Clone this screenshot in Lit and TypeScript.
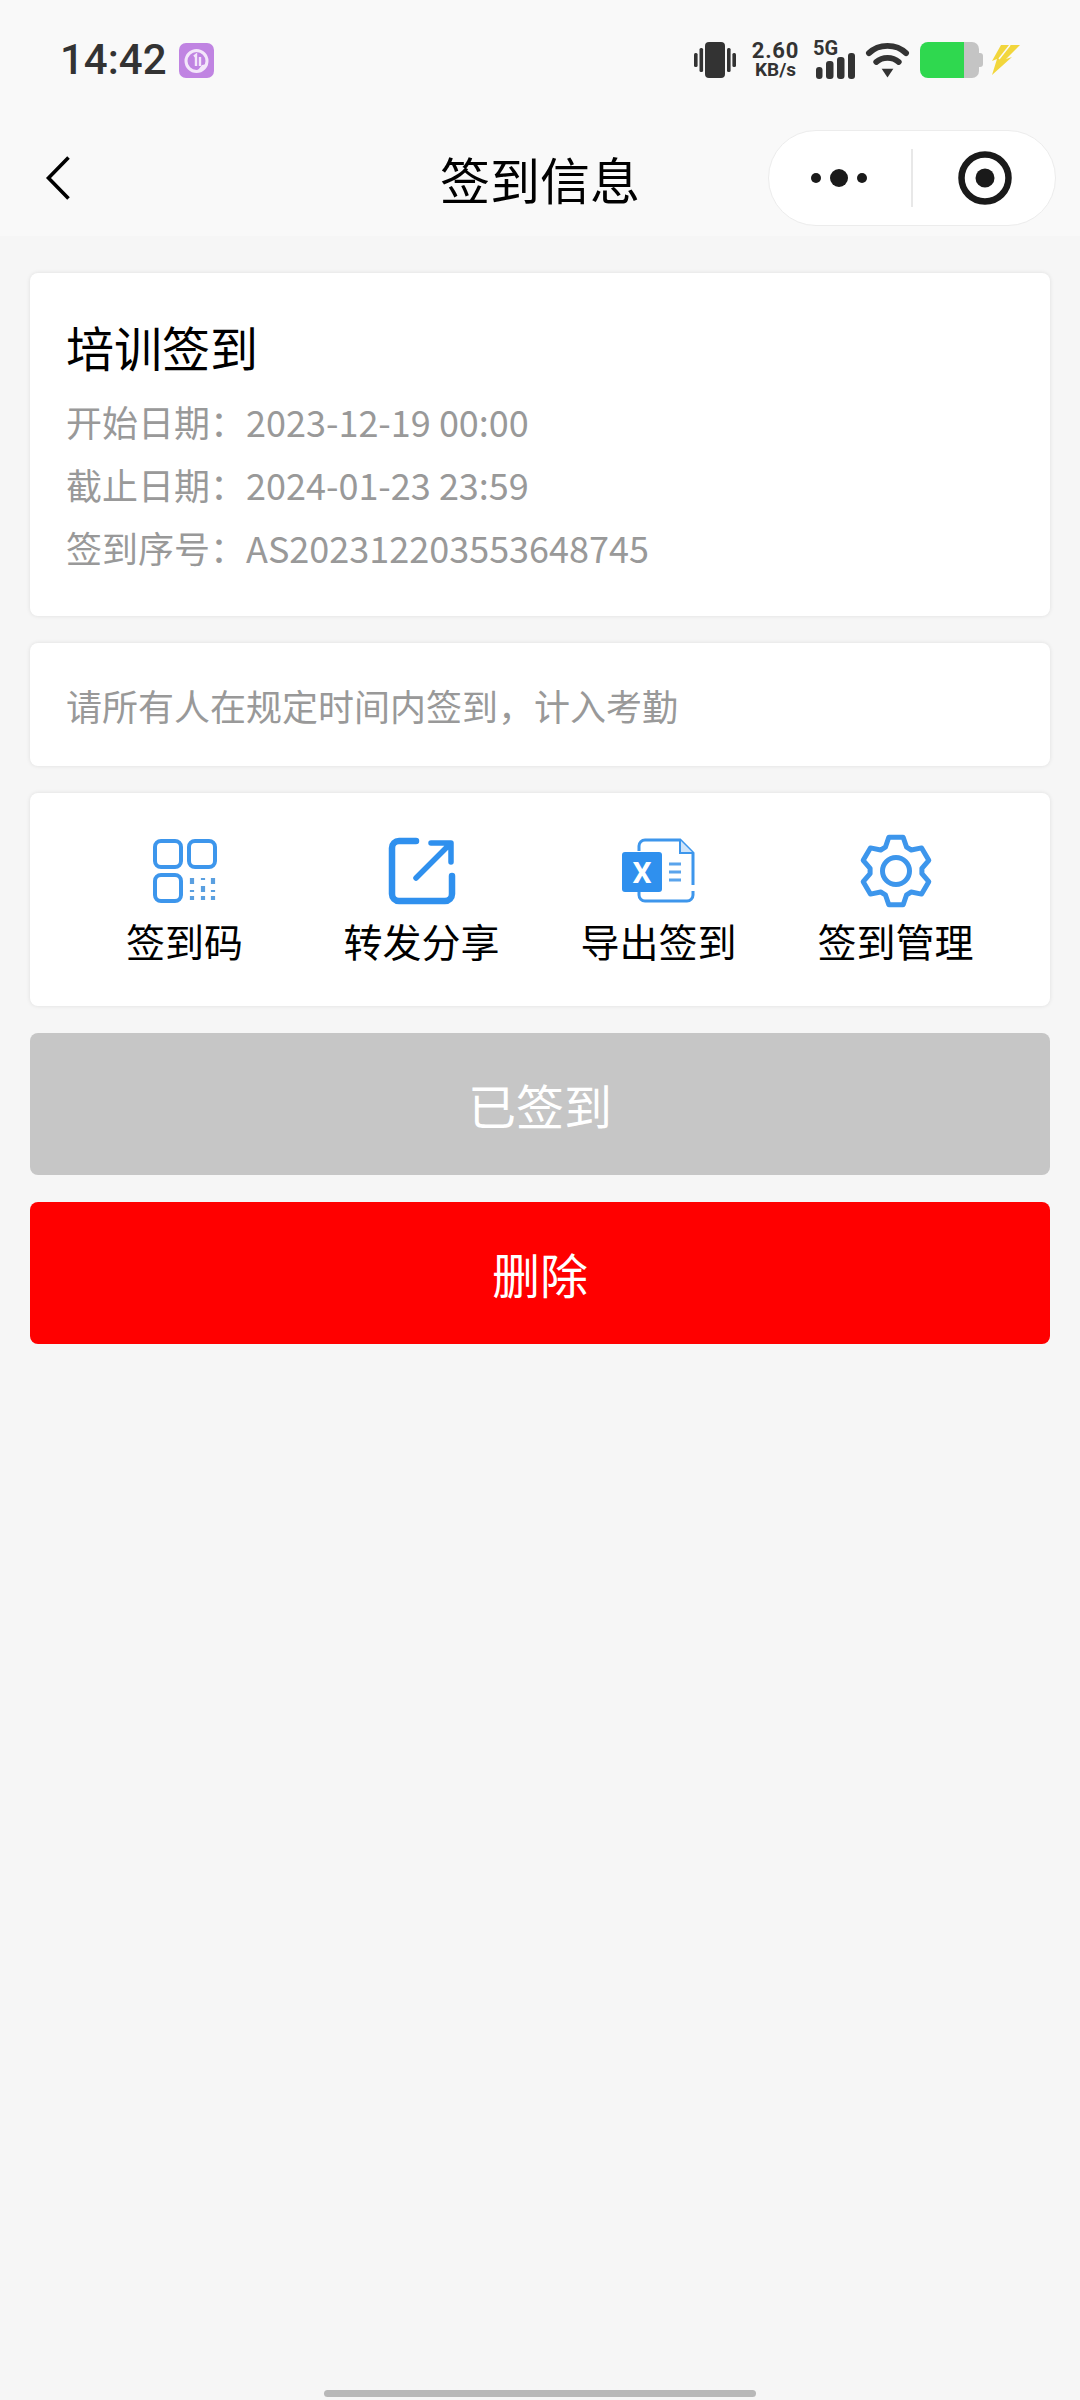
import { LitElement, html, css, svg } from "lit";
import { customElement } from "lit/decorators.js";

function gearPoints(): string {
  const c = 37;
  const pts: string[] = [];
  const p = (r: number, deg: number) => {
    const t = (deg * Math.PI) / 180;
    return `${(c + r * Math.cos(t)).toFixed(1)},${(c + r * Math.sin(t)).toFixed(1)}`;
  };
  for (let k = 0; k < 6; k++) {
    const a = k * 60 - 90;
    pts.push(p(26, a - 24), p(34.5, a - 12), p(34.5, a + 12), p(26, a + 24));
  }
  return pts.join(" ");
}

const ACTIONS = [
  { label: "签到码", icon: "qr" },
  { label: "转发分享", icon: "share" },
  { label: "导出签到", icon: "excel" },
  { label: "签到管理", icon: "gear" },
];

@customElement("app-root")
export class AppRoot extends LitElement {
  static styles = css`
    :host {
      display: block;
      font-family: "Noto Sans CJK SC", "Noto Sans", sans-serif;
    }
    .page {
      width: 1080px;
      min-height: 2400px;
      background: #f6f6f6;
      display: flex;
      flex-direction: column;
    }
    .top {
      background: #f9f9f9;
    }
    .status {
      height: 120px;
      padding: 0 60px;
      display: flex;
      align-items: center;
      justify-content: space-between;
    }
    .status-left {
      display: flex;
      align-items: center;
      gap: 12px;
    }
    .time {
      font-family: Roboto, sans-serif;
      font-weight: 500;
      font-size: 42px;
      line-height: 42px;
      color: #333;
    }
    .status-right {
      display: flex;
      align-items: center;
      gap: 11px;
      color: #333;
    }
    svg {
      display: block;
      overflow: visible;
    }
    .vib {
      margin-right: 2px;
    }
    .speed {
      width: 53px;
      display: flex;
      flex-direction: column;
      align-items: center;
      font-family: Roboto, sans-serif;
      font-weight: 700;
    }
    .speed .v {
      font-size: 22px;
      line-height: 20px;
      letter-spacing: 0.8px;
    }
    .speed .u {
      font-size: 19px;
      line-height: 18px;
    }
    .signal {
      width: 42px;
      height: 38px;
      position: relative;
    }
    .fiveg {
      position: absolute;
      left: 0;
      top: -3px;
      font-family: Roboto, sans-serif;
      font-weight: 700;
      font-size: 20px;
      line-height: 20px;
    }
    .nav {
      height: 116px;
      padding: 0 24px;
      display: grid;
      grid-template-columns: minmax(0, 1fr) auto minmax(0, 1fr);
      align-items: center;
    }
    .back {
      margin-left: 22px;
    }
    .title {
      font-size: 50px;
      line-height: 60px;
      color: #000;
    }
    .capsule {
      justify-self: end;
      width: 288px;
      height: 96px;
      flex: none;
      box-sizing: border-box;
      border: 1.5px solid #ececec;
      border-radius: 48px;
      background: #fff;
      display: grid;
      grid-template-columns: 1fr 1.5px 1fr;
      align-items: center;
      justify-items: center;
    }
    .dots {
      margin-right: 2px;
    }
    .target {
      margin-left: 2px;
    }
    .divider {
      width: 1.5px;
      height: 58px;
      background: #e8e8e8;
    }
    main {
      padding: 37px 30px 0;
      display: flex;
      flex-direction: column;
      gap: 27px;
    }
    .card {
      background: #fff;
      border-radius: 8px;
      box-shadow: 0 0 4px rgba(0, 0, 0, 0.1);
    }
    .info {
      height: 343px;
      box-sizing: border-box;
      padding: 37px 36px 0;
    }
    .info h1 {
      margin: 0 0 8px;
      font-size: 48px;
      line-height: 72px;
      font-weight: 400;
      color: #000;
    }
    .row {
      font-size: 36px;
      line-height: 63px;
      color: #999;
      display: flex;
    }
    .row .k {
      width: 180px;
    }
    .note {
      height: 123px;
      box-sizing: border-box;
      padding: 0 36px;
      display: flex;
      align-items: center;
      font-size: 36px;
      color: #999;
    }
    .actions {
      height: 213px;
      box-sizing: border-box;
      padding: 0 36px;
      display: grid;
      grid-template-columns: repeat(4, 1fr);
    }
    .action {
      display: flex;
      flex-direction: column;
      align-items: center;
    }
    .ico {
      height: 128px;
      display: flex;
      align-items: center;
      padding-top: 27px;
      box-sizing: border-box;
      justify-content: center;
    }
    .action span {
      font-size: 39px;
      line-height: 46px;
      color: #000;
      white-space: nowrap;
      margin-top: -4px;
    }
    .btn {
      height: 142px;
      border-radius: 8px;
      display: flex;
      align-items: center;
      justify-content: center;
      color: #fff;
      font-size: 48px;
    }
    .btn.done {
      background: #c6c6c6;
    }
    .btn.del {
      background: #ff0000;
    }
    .home {
      margin: auto 324px 3px;
      height: 7px;
      border-radius: 4px;
      background: #b8b8b8;
    }
  `;

  private iconFor(name: string) {
    const blue = "#3d96ec";
    if (name === "qr") {
      return html`<svg width="64" height="64" viewBox="0 0 64 64" fill="none" stroke="${blue}" stroke-width="4">
        <rect x="2" y="2" width="26" height="26" rx="6" />
        <rect x="36" y="2" width="26" height="26" rx="6" />
        <rect x="2" y="36" width="26" height="26" rx="6" />
        <path d="M39 39v6M39 51v2M39 57v4M50 39v2M50 47v6M50 57v4M60 39v6M60 51v2M60 57v4" stroke-width="4.2" stroke="#5a9fe0" />
      </svg>`;
    }
    if (name === "share") {
      return html`<svg width="66" height="66" viewBox="0 0 66 66" fill="none" stroke="#2f90ee" stroke-width="6.5" stroke-linecap="round" stroke-linejoin="round">
        <path d="M27 3H10a7 7 0 0 0-7 7V56a7 7 0 0 0 7 7H56a7 7 0 0 0 7-7V38" />
        <path d="M27 40L60 7M42 5H62V24" stroke-width="5.5" />
      </svg>`;
    }
    if (name === "excel") {
      return html`<svg width="73" height="63" viewBox="0 0 73 63" fill="none">
        <path d="M17 12V7a6 6 0 0 1 6-6H58L71 14V46M71 52v4a6 6 0 0 1-6 6H23a6 6 0 0 1-6-6V52" stroke="${blue}" stroke-width="3" />
        <path d="M58 1V14H71" stroke="${blue}" stroke-width="2" fill="#cfe4f9" />
        <path d="M47 25H59M47 33H59M47 41H59" stroke="#5aa4ec" stroke-width="3" />
        <rect x="0" y="13" width="40" height="40" rx="3" fill="#2f90ee" />
        <text x="20" y="44" text-anchor="middle" fill="#fff" font-family="Roboto, sans-serif" font-weight="700" font-size="30">X</text>
      </svg>`;
    }
    return html`<svg width="74" height="74" viewBox="0 0 74 74" fill="none" stroke="${blue}" stroke-width="5" stroke-linejoin="round">
      ${svg`<polygon points="${gearPoints()}" />`}
      <circle cx="37" cy="37" r="13.5" />
    </svg>`;
  }

  render() {
    return html`
      <div class="page">
        <div class="top">
          <div class="status">
            <div class="status-left">
              <div class="time">14:42</div>
              <svg width="35" height="35" viewBox="0 0 35 35" fill="none">
                <rect width="35" height="35" rx="7" fill="#c084e2" />
                <circle cx="17.5" cy="18" r="10.5" stroke="#f3e6fa" stroke-width="3" />
                <path d="M15 13.5l2-1.5V23M21 14v9" stroke="#f3e6fa" stroke-width="2.4" />
                <path d="M19 27c4 0 8-2 10-6l-6 1z" fill="#f3e6fa" />
              </svg>
            </div>
            <div class="status-right">
              <svg class="vib" width="42" height="36" viewBox="0 0 42 36" fill="#333">
                <rect x="11" y="0" width="20" height="36" rx="4" />
                <rect x="0" y="11" width="3.6" height="14" rx="1.5" />
                <rect x="5.5" y="6" width="3.6" height="24" rx="1.5" />
                <rect x="33" y="6" width="3.6" height="24" rx="1.5" />
                <rect x="38.4" y="11" width="3.6" height="14" rx="1.5" />
              </svg>
              <div class="speed"><div class="v">2.60</div><div class="u">KB/s</div></div>
              <div class="signal">
                <div class="fiveg">5G</div>
                <svg width="42" height="38" viewBox="0 0 42 38" fill="#333">
                  <rect x="3" y="26" width="6.5" height="12" rx="3" />
                  <rect x="13" y="20" width="7.5" height="18" rx="3" />
                  <rect x="24" y="16" width="7.5" height="22" rx="3" />
                  <rect x="35" y="12" width="7" height="26" rx="3" />
                </svg>
              </div>
              <svg width="43" height="36" viewBox="0 0 44 36" fill="none" stroke="#333">
                <path d="M3 11C13 1 31 1 41 11" stroke-width="6" stroke-linecap="round" />
                <path d="M10.5 20C17 14.5 27 14.5 33.5 20" stroke-width="6" stroke-linecap="round" />
                <path d="M16 27H28L22 36Z" fill="#333" stroke="none" />
              </svg>
              <svg width="63" height="36" viewBox="0 0 63 36">
                <path d="M44 0H52a7 7 0 0 1 7 7V29a7 7 0 0 1-7 7H44Z" fill="#c4c4c4" />
                <path d="M59 11h1a3 3 0 0 1 3 3v8a3 3 0 0 1-3 3h-1Z" fill="#c4c4c4" />
                <path d="M8 0H44V36H8a8 8 0 0 1-8-8V8a8 8 0 0 1 8-8Z" fill="#2fd84f" />
              </svg>
              <svg width="28" height="32" viewBox="0 0 28 32" style="margin-left:-2px">
                <path d="M9 1H28L14 15 20 13 0 31 5 15 0 17Z" fill="#f2d63c" />
                <path d="M18 1L7 15" stroke="#fafafa" stroke-width="1.5" fill="none" />
              </svg>
            </div>
          </div>
          <div class="nav">
            <svg class="back" width="24" height="44" viewBox="0 0 24 44" fill="none" stroke="#000" stroke-width="3.6">
              <path d="M22.5 1.5L2.5 22L22.5 42.5" />
            </svg>
            <div class="title">签到信息</div>
            <div class="capsule">
              <svg class="dots" width="64" height="20" viewBox="0 0 64 20" fill="#1a1a1a">
                <circle cx="9" cy="10" r="5" />
                <circle cx="32" cy="10" r="9" />
                <circle cx="55" cy="10" r="5" />
              </svg>
              <div class="divider"></div>
              <svg class="target" width="54" height="54" viewBox="0 0 54 54" fill="none">
                <circle cx="27" cy="27" r="23.5" stroke="#1a1a1a" stroke-width="6.5" />
                <circle cx="27" cy="27" r="9.5" fill="#1a1a1a" />
              </svg>
            </div>
          </div>
        </div>
        <main>
          <section class="card info">
            <h1>培训签到</h1>
            <div class="row"><div class="k">开始日期：</div><div>2023-12-19 00:00</div></div>
            <div class="row"><div class="k">截止日期：</div><div>2024-01-23 23:59</div></div>
            <div class="row"><div class="k">签到序号：</div><div>AS202312203553648745</div></div>
          </section>
          <section class="card note">请所有人在规定时间内签到，计入考勤</section>
          <section class="card actions">
            ${ACTIONS.map(
              (a) => html`<div class="action">
                <div class="ico">${this.iconFor(a.icon)}</div>
                <span>${a.label}</span>
              </div>`
            )}
          </section>
          <div class="btn done">已签到</div>
          <div class="btn del">删除</div>
        </main>
        <div class="home"></div>
      </div>
    `;
  }
}
